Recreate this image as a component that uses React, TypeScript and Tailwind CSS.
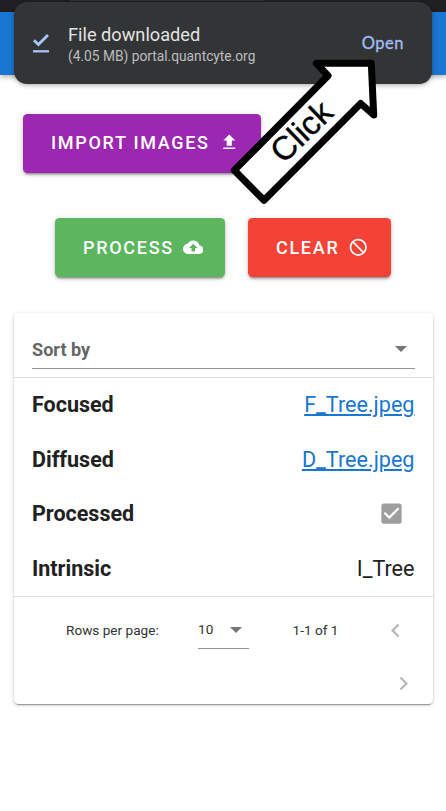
import type { ReactNode } from "react";

const UPLOAD = "M9,16V10H5L12,3L19,10H15V16H9M5,20V18H19V20H5Z";
const CLOUD =
  "M14,13V17H10V13H7L12,8L17,13M19.35,10.03C18.67,6.59 15.64,4 12,4C9.11,4 6.6,5.64 5.35,8.03C2.34,8.36 0,10.9 0,14A6,6 0 0,0 6,20H19A5,5 0 0,0 24,15C24,12.36 21.95,10.22 19.35,10.03Z";
const CANCEL =
  "M12 2C17.5 2 22 6.5 22 12S17.5 22 12 22 2 17.5 2 12 6.5 2 12 2M12 4C10.1 4 8.4 4.6 7.1 5.7L18.3 16.9C19.3 15.5 20 13.8 20 12C20 7.6 16.4 4 12 4M16.9 18.3L5.7 7.1C4.6 8.4 4 10.1 4 12C4 16.4 7.6 20 12 20C13.9 20 15.6 19.4 16.9 18.3Z";
const CHEVRON_LEFT = "M15.41,16.58L10.83,12L15.41,7.41L14,6L8,12L14,18L15.41,16.58Z";
const CHEVRON_RIGHT = "M8.59,16.58L13.17,12L8.59,7.41L10,6L16,12L10,18L8.59,16.58Z";
const CHECKBOX =
  "M10,17L5,12L6.41,10.58L10,14.17L17.59,6.58L19,8M19,3H5C3.89,3 3,3.89 3,5V19A2,2 0 0,0 5,21H19A2,2 0 0,0 21,19V5C21,3.89 20.1,3 19,3Z";

function Icon({ d, className }: { d: string; className: string }) {
  return (
    <svg viewBox="0 0 24 24" fill="currentColor" className={`shrink-0 ${className}`}>
      <path d={d} />
    </svg>
  );
}

function Button({ label, icon, className }: { label: string; icon: string; className: string }) {
  return (
    <button
      className={`flex h-[59px] items-center justify-start rounded-[4.5px] pl-[28px] text-[18px] font-medium tracking-[1.7px] text-white shadow-[0_3px_2px_-2px_rgba(0,0,0,0.3),0_2px_3px_rgba(0,0,0,0.18),0_1px_6px_rgba(0,0,0,0.14)] ${className}`}
    >
      {label}
      <Icon d={icon} className="ml-[9px] size-[20.5px]" />
    </button>
  );
}

function Row({ label, children }: { label: string; children: ReactNode }) {
  return (
    <div className="flex h-[54.5px] items-center justify-between text-[21.6px] text-[#212121]">
      <span className="text-[21.5px] font-bold">{label}</span>
      {children}
    </div>
  );
}

function Caret() {
  return (
    <svg viewBox="0 0 12 6" className="h-[6px] w-[12px] fill-[#757575]">
      <path d="M0 0H12L6 6Z" />
    </svg>
  );
}

function Toast() {
  return (
    <div className="absolute top-[2px] left-[14px] flex h-[82px] w-[418px] items-center rounded-[13px] bg-[#333436] pr-[28px] pl-[18px] shadow-[0_1px_5px_rgba(0,0,0,0.35)]">
      <svg viewBox="0 0 18 20" className="h-[20px] w-[18px] shrink-0" fill="none" stroke="#a9c5fa">
        <path d="M2 7.3L6.4 11.6L16 2" strokeWidth="2.8" />
        <path d="M1 18.3H17" strokeWidth="2.3" />
      </svg>
      <div className="ml-[18px] flex flex-1 flex-col pt-[3px]">
        <span className="text-[18.2px] leading-[22px] text-[#e3e3e3]">File downloaded</span>
        <span className="text-[13.75px] leading-[20px] text-[#bdbdbf]">(4.05 MB) portal.quantcyte.org</span>
      </div>
      <span className="pt-[1px] font-[Lato,sans-serif] text-[16.5px] tracking-[0.5px] text-[#a0bdf4] [-webkit-text-stroke:0.3px_#a0bdf4]">
        Open
      </span>
    </div>
  );
}

function ClickArrow() {
  return (
    <svg viewBox="0 0 446 220" className="absolute top-0 left-0 h-[220px] w-[446px]">
      <path
        d="M234.3 170.3L328 75.7L316.3 63.3H371.3L373.7 115L360.7 103.5L264 200.3Z"
        fill="#fff"
        stroke="#000"
        strokeWidth="7"
        strokeLinejoin="round"
      />
      <text
        transform="translate(283.5 164.5) rotate(-44)"
        fontSize="33"
        fontFamily="'Liberation Sans', Arial, sans-serif"
        stroke="#000"
        strokeWidth="0.4"
      >
        Click
      </text>
    </svg>
  );
}

export default function App() {
  return (
    <div className="relative h-[811px] w-[446px] overflow-hidden bg-white font-[Roboto,sans-serif]">
      <div className="h-[12px] bg-[#202022]">
        <div className="mx-auto h-[1px] w-[194px] translate-x-[-56px] rounded-b-full bg-[#333436]" />
      </div>
      <header className="h-[63px] bg-[#1976d2] shadow-[0_2px_5px_rgba(0,0,0,0.3)]" />

      <main className="pt-[38.5px]">
        <div className="pl-[23px]">
          <Button label="IMPORT IMAGES" icon={UPLOAD} className="w-[237.5px] bg-[#9c27b0] pb-[2px]" />
        </div>
        <div className="mt-[45.5px] flex justify-center gap-[23px]">
          <Button label="PROCESS" icon={CLOUD} className="w-[170px] bg-[#5cb660]" />
          <Button label="CLEAR" icon={CANCEL} className="w-[143px] bg-[#f44336]" />
        </div>

        <section className="mx-[14px] mt-[36px] h-[391px] w-[419px] rounded-[4.5px] bg-white shadow-[0_3px_1px_-2px_rgba(0,0,0,0.25),0_1px_2px_rgba(0,0,0,0.2),0_1px_5px_rgba(0,0,0,0.12)]">
          <div className="h-[65px] border-b border-[#dedede] px-[18px] pt-[17px]">
            <div className="flex h-[39px] items-center justify-between border-b border-[#949494] pr-[8px]">
              <span className="pt-[1px] text-[18.1px] font-bold text-[#666]">Sort by</span>
              <Caret />
            </div>
          </div>
          <div className="h-[218px] pr-[18.5px] pl-[18px]">
            <Row label="Focused">
              <a className="text-[#1976d2] underline">F_Tree.jpeg</a>
            </Row>
            <Row label="Diffused">
              <a className="text-[#1976d2] underline">D_Tree.jpeg</a>
            </Row>
            <Row label="Processed">
              <Icon d={CHECKBOX} className="mr-[9.5px] mb-[1px] size-[27px] text-[#9e9e9e]" />
            </Row>
            <Row label="Intrinsic">
              <span>I_Tree</span>
            </Row>
          </div>
          <footer className="border-t border-[#dedede] text-[13.6px] text-[#333]">
            <div className="flex h-[66px] items-center pl-[52px]">
              <span className="w-[132px]">Rows per page:</span>
              <div className="flex h-[37px] w-[51px] items-center justify-between border-b border-[#949494] pr-[7px]">
                <span>10</span>
                <Caret />
              </div>
              <span className="ml-[43.5px] w-[89.5px]">1-1 of 1</span>
              <Icon d={CHEVRON_LEFT} className="size-[27px] text-[#b8b8b8]" />
            </div>
            <div className="flex h-[41px] items-center justify-end pr-[16px]">
              <Icon d={CHEVRON_RIGHT} className="size-[27px] text-[#b8b8b8]" />
            </div>
          </footer>
        </section>
      </main>

      <Toast />
      <ClickArrow />
    </div>
  );
}
